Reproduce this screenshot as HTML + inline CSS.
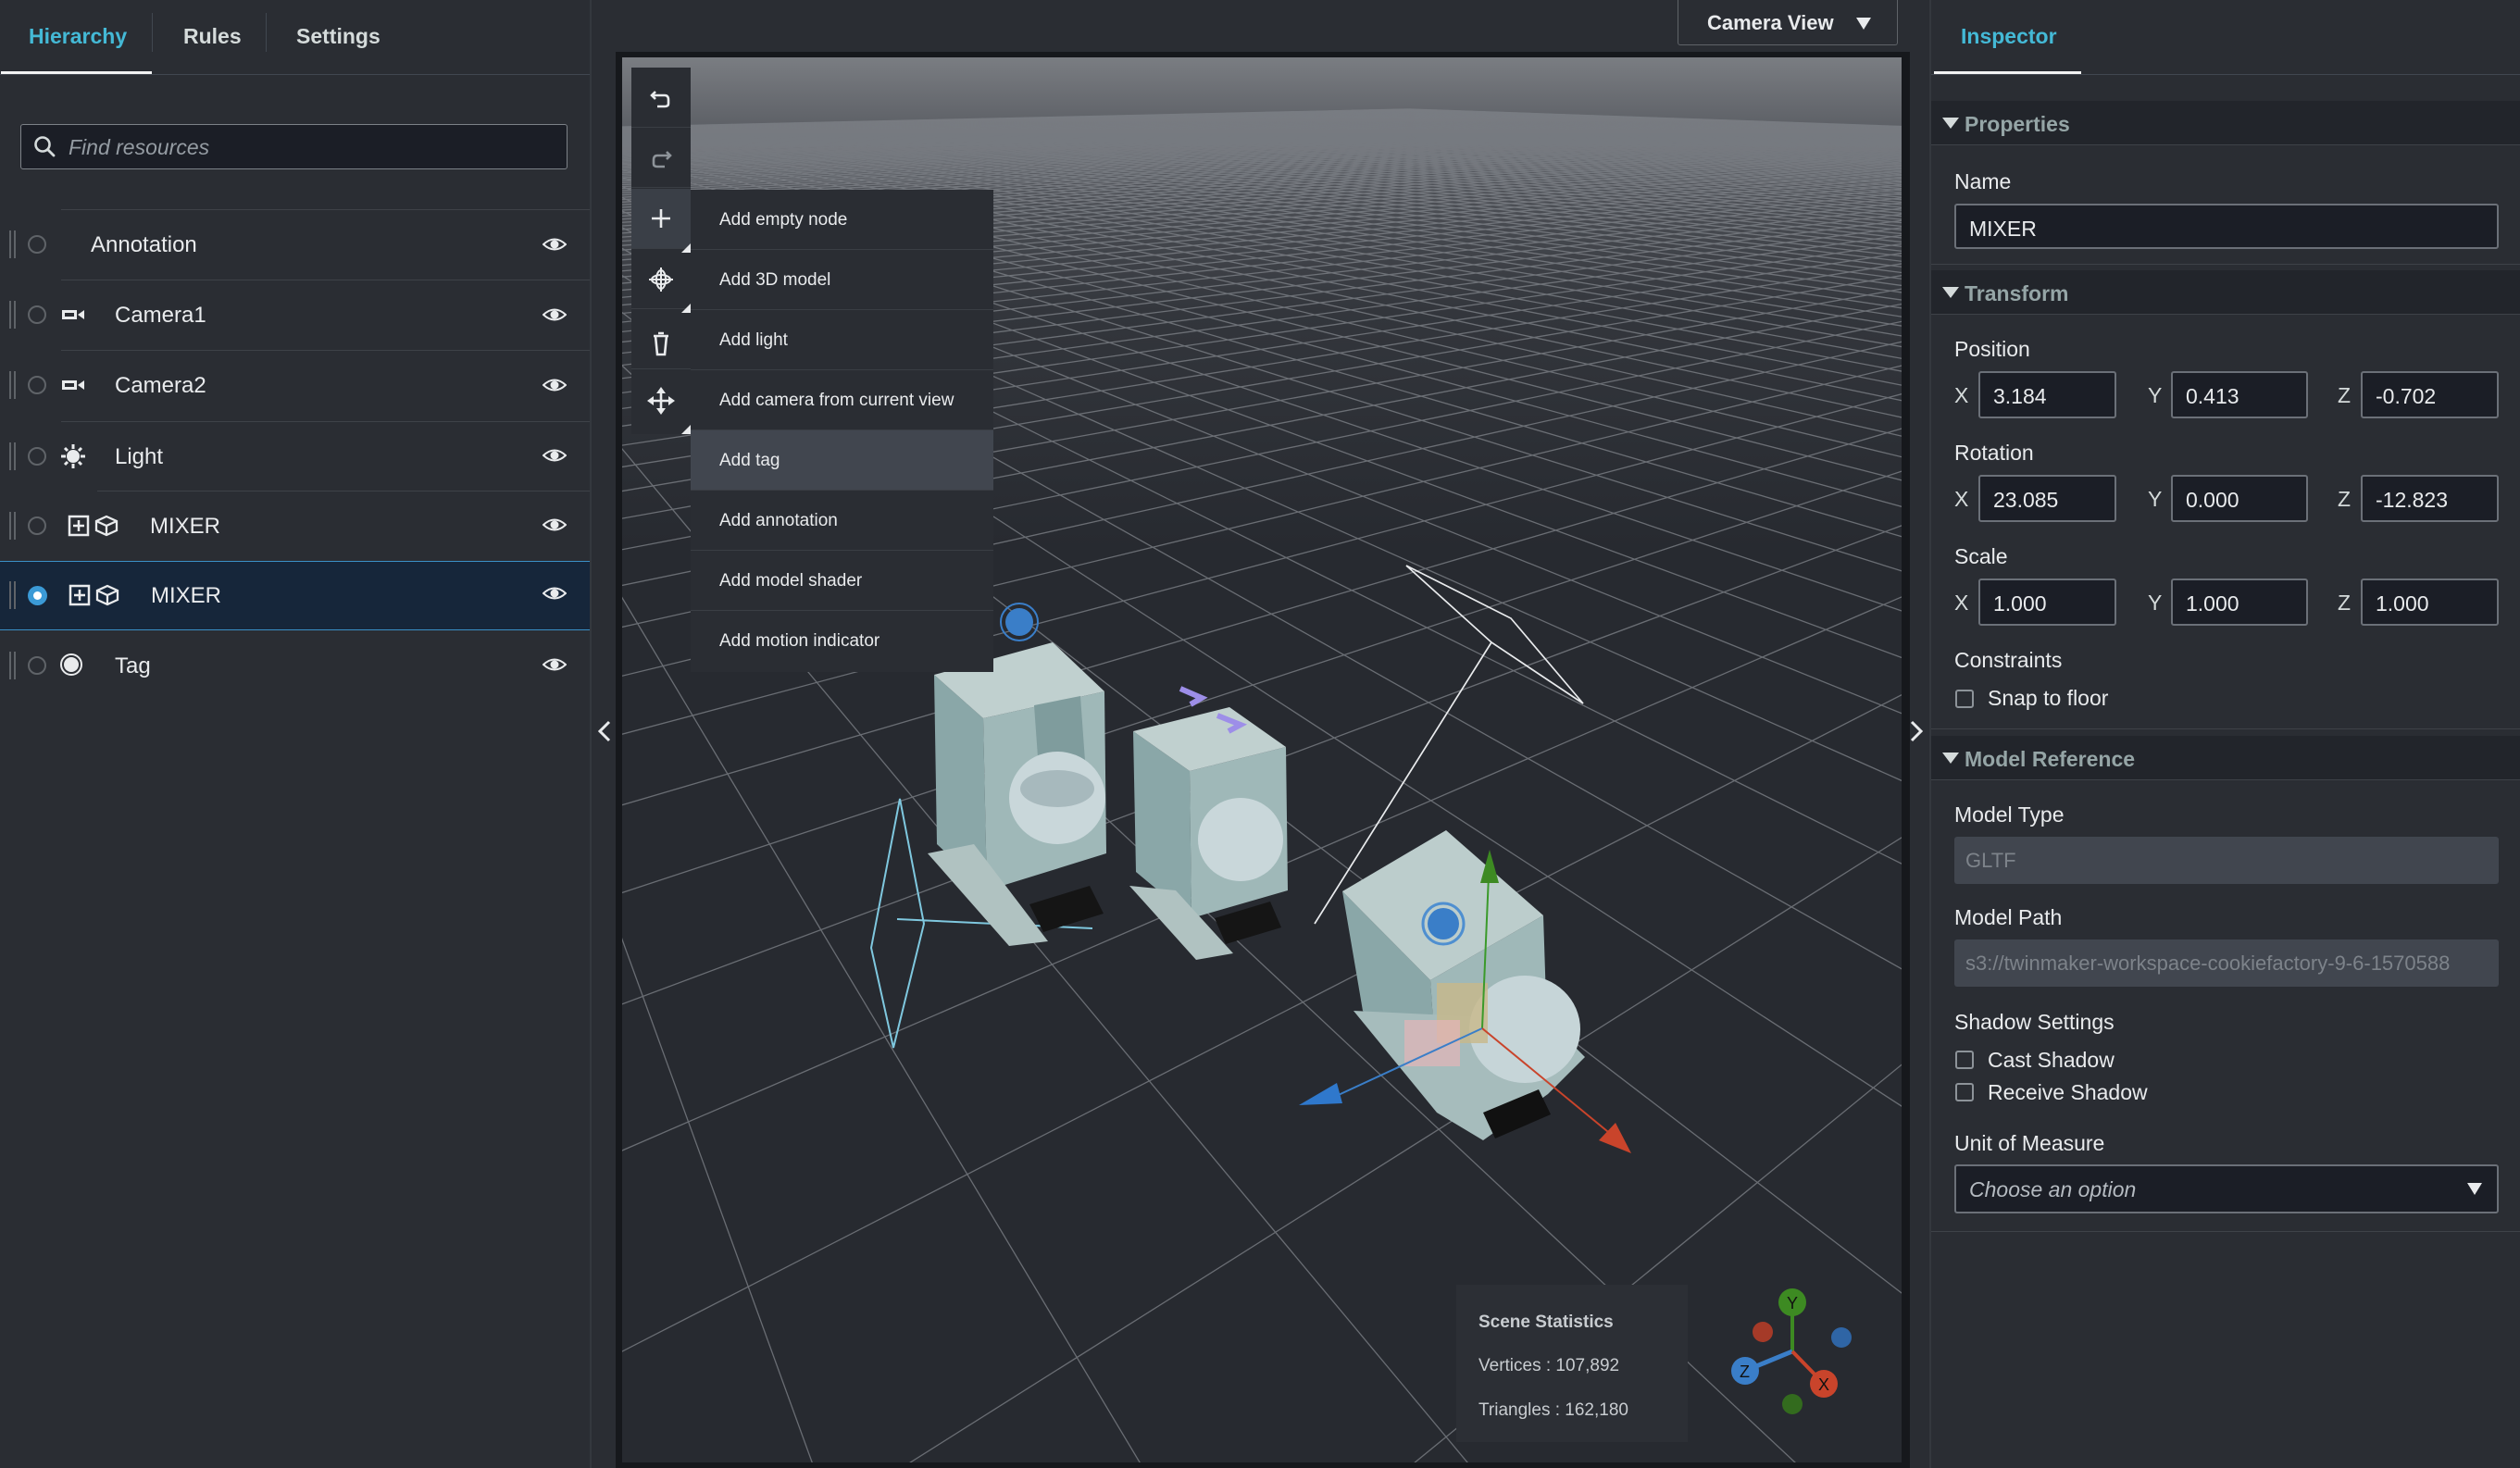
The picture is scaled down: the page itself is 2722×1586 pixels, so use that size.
<!DOCTYPE html>
<html><head><meta charset="utf-8">
<style>
*{box-sizing:border-box;margin:0;padding:0}
html,body{width:2722px;height:1586px;overflow:hidden}
body{background:#2a2d33;font-family:"Liberation Sans",sans-serif;color:#e9ebed;position:relative}
.a{position:absolute}
.tab{position:absolute;top:26px;font-size:23px;font-weight:bold;color:#d5dbdb}
.row{position:absolute;left:0;width:637px;height:76px}
.row .t{position:absolute;top:25px;font-size:24px;color:#e9ebed}
.hand{position:absolute;left:10px;top:23px;width:7px;height:30px;border-left:2px solid #5f6368;border-right:2px solid #5f6368}
.rad{position:absolute;left:30px;top:28px;width:20px;height:20px;border:2px solid #5f6368;border-radius:50%}
.sep{position:absolute;height:1px;background:#3e4248}
.lbl{position:absolute;font-size:23px;color:#e9ebed}
.inp{position:absolute;background:#1b1e26;border:2px solid #6b7078;border-radius:3px;font-size:23px;color:#e9ebed;padding:12px 0 0 14px}
.hdr{position:absolute;left:2086px;width:636px;height:48px;background:#22252b;border-bottom:1px solid #3e4248}
.hdr span{position:absolute;left:36px;top:12px;font-size:23px;font-weight:bold;color:#95a5a6}
.hdr i{position:absolute;left:12px;top:18px;width:0;height:0;border-left:9px solid transparent;border-right:9px solid transparent;border-top:12px solid #d5dbdb}
.ax{position:absolute;font-size:23px;color:#d5dbdb}
.cb{position:absolute;width:20px;height:20px;border:2px solid #8d9399;border-radius:3px}
.mi{position:absolute;left:746px;width:327px;height:65px;background:#2a2d33;border-bottom:1px solid #3a3e44;font-size:19px;color:#e9ebed;padding:22px 0 0 31px}
.tb{position:absolute;left:682px;width:64px;height:65px;background:#2a2d33;border-bottom:1px solid #3a3e44}
</style></head><body>

<!-- LEFT PANEL -->
<div class="tab" style="left:31px;color:#44b9d6">Hierarchy</div>
<div class="a" style="left:164px;top:14px;width:1px;height:42px;background:#414750"></div>
<div class="tab" style="left:198px">Rules</div>
<div class="a" style="left:287px;top:14px;width:1px;height:42px;background:#414750"></div>
<div class="tab" style="left:320px">Settings</div>
<div class="a" style="left:0;top:80px;width:637px;height:1px;background:#414750"></div>
<div class="a" style="left:1px;top:77px;width:163px;height:3px;background:#f2f3f3"></div>

<div class="a" style="left:22px;top:134px;width:591px;height:49px;background:#1b1e26;border:1.5px solid #7d8288;border-radius:3px"></div>
<svg class="a" style="left:36px;top:146px" width="26" height="26" viewBox="0 0 26 26"><circle cx="10" cy="10" r="7.5" fill="none" stroke="#d5dbdb" stroke-width="2.6"/><path d="M15.5 15.5 L22 22" stroke="#d5dbdb" stroke-width="2.8" stroke-linecap="round"/></svg>
<div class="a" style="left:74px;top:146px;font-size:23px;font-style:italic;color:#959ca3">Find resources</div>

<div class="sep" style="left:66px;top:226px;width:571px"></div>
<div class="row" style="top:226px"><div class="hand"></div><div class="rad"></div><div class="t" style="left:98px">Annotation</div></div>
<div class="sep" style="left:66px;top:302px;width:571px"></div>
<div class="row" style="top:302px"><div class="hand"></div><div class="rad"></div>
<svg class="a" style="left:66px;top:30px" width="26" height="16"><rect x="1" y="3" width="16" height="10" fill="#e9ebed"/><rect x="4" y="6" width="10" height="4" fill="#2a2d33"/><path d="M18 8 L25 3 V13 Z" fill="#e9ebed"/></svg>
<div class="t" style="left:124px">Camera1</div></div>
<div class="sep" style="left:66px;top:378px;width:571px"></div>
<div class="row" style="top:378px"><div class="hand"></div><div class="rad"></div>
<svg class="a" style="left:66px;top:30px" width="26" height="16"><rect x="1" y="3" width="16" height="10" fill="#e9ebed"/><rect x="4" y="6" width="10" height="4" fill="#2a2d33"/><path d="M18 8 L25 3 V13 Z" fill="#e9ebed"/></svg>
<div class="t" style="left:124px">Camera2</div></div>
<div class="sep" style="left:66px;top:455px;width:571px"></div>
<div class="row" style="top:455px"><div class="hand"></div><div class="rad"></div>
<svg class="a" style="left:65px;top:24px" width="28" height="28" viewBox="0 0 28 28"><circle cx="14" cy="14" r="7" fill="#e9ebed"/><g stroke="#e9ebed" stroke-width="3"><path d="M14 1V6M14 22V27M1 14H6M22 14H27M5 5L8 8M20 20L23 23M5 23L8 20M20 8L23 5"/></g></svg>
<div class="t" style="left:124px">Light</div></div>
<div class="sep" style="left:105px;top:530px;width:532px"></div>
<div class="row" style="top:530px"><div class="hand"></div><div class="rad"></div>
<svg class="a" style="left:73px;top:26px" width="58" height="24"><rect x="2" y="2" width="20" height="20" fill="none" stroke="#e9ebed" stroke-width="2.5"/><path d="M12 6V18M6 12H18" stroke="#e9ebed" stroke-width="2.5"/><path d="M42 2 L53 7 V17 L42 22 L31 17 V7 Z M31 7 L42 12 L53 7 M42 12 V22" fill="none" stroke="#e9ebed" stroke-width="2.3"/></svg>
<div class="t" style="left:162px">MIXER</div></div>
<div class="a" style="left:0;top:606px;width:637px;height:75px;background:#16263a;border-top:1px solid #3a8fc6;border-bottom:1px solid #3a8fc6"></div>
<div class="row" style="top:605px"><div class="hand"></div><div class="a" style="left:30px;top:28px;width:21px;height:21px;border-radius:50%;background:#3b9ad6"></div><div class="a" style="left:36px;top:34px;width:9px;height:9px;border-radius:50%;background:#fff"></div>
<svg class="a" style="left:74px;top:26px" width="58" height="24"><rect x="2" y="2" width="20" height="20" fill="none" stroke="#e9ebed" stroke-width="2.5"/><path d="M12 6V18M6 12H18" stroke="#e9ebed" stroke-width="2.5"/><path d="M42 2 L53 7 V17 L42 22 L31 17 V7 Z M31 7 L42 12 L53 7 M42 12 V22" fill="none" stroke="#e9ebed" stroke-width="2.3"/></svg>
<div class="t" style="left:163px">MIXER</div></div>
<div class="row" style="top:681px"><div class="hand"></div><div class="rad"></div>
<svg class="a" style="left:64px;top:24px" width="26" height="26"><circle cx="13" cy="13" r="11" fill="none" stroke="#e9ebed" stroke-width="2"/><circle cx="13" cy="13" r="8" fill="#e9ebed"/></svg>
<div class="t" style="left:124px">Tag</div></div>

<svg class="a" style="left:586px;top:256px" width="26" height="480">
<defs><g id="e" fill="none" stroke="#e9ebed" stroke-width="2"><path d="M1 8 Q13 -3 25 8 Q13 19 1 8 Z"/><circle cx="13" cy="8" r="3.5" fill="#e9ebed"/></g></defs>
<use href="#e" y="0"/><use href="#e" y="76"/><use href="#e" y="152"/><use href="#e" y="228"/><use href="#e" y="303"/><use href="#e" y="377"/><use href="#e" y="454"/>
</svg>

<div class="a" style="left:637px;top:0;width:2px;height:1586px;background:#34383e"></div>

<!-- CENTER -->
<div class="a" style="left:665px;top:56px;width:1398px;height:1530px;background:#16181c"></div>
<div class="a" style="left:1812px;top:0;width:238px;height:49px;border:1.5px solid #5f6368;border-top:none;border-radius:0 0 3px 3px"></div>
<div class="a" style="left:1844px;top:12px;font-size:22px;font-weight:bold;color:#e9ebed">Camera View</div>
<div class="a" style="left:2005px;top:19px;border-left:8px solid transparent;border-right:8px solid transparent;border-top:13px solid #e9ebed"></div>
<svg class="a" style="left:641px;top:775px" width="24" height="30"><path d="M17 5 L7 15 L17 25" fill="none" stroke="#e9ebed" stroke-width="3"/></svg>
<svg class="a" style="left:2058px;top:775px" width="24" height="30"><path d="M7 5 L17 15 L7 25" fill="none" stroke="#e9ebed" stroke-width="3"/></svg>

<svg id="vp" class="a" style="left:672px;top:62px" width="1382" height="1518" viewBox="0 0 1382 1518">
<defs><linearGradient id="hz" x1="0" y1="0" x2="0" y2="1"><stop offset="0" stop-color="#7a7d82"/><stop offset="0.05" stop-color="#5d6066"/><stop offset="0.18" stop-color="#33363c"/><stop offset="0.35" stop-color="#272a30"/><stop offset="1" stop-color="#272a30"/></linearGradient></defs>
<rect width="1382" height="1518" fill="url(#hz)"/>
<g id="grid" stroke="#80848a" stroke-width="1.3" fill="none" opacity="0.75"></g>
<!-- frustums -->
<path d="M300 801 L326 936 L293 1070 L269 962 Z M297 931 L508 941" stroke="#7fc8df" stroke-width="2" fill="none"/>
<path d="M847 549 L960 606 L1038 698 L939 632 Z M939 632 L748 936" stroke="#e9ebed" stroke-width="1.7" fill="none"/>
<!-- mixer 1 -->
<g>
<path d="M337 667 L390 714 L394 900 L340 850 Z" fill="#8aa7a8"/>
<path d="M390 714 L521 685 L523 860 L394 900 Z" fill="#9fb8b8"/>
<path d="M337 667 L465 632 L521 685 L390 714 Z" fill="#c0d0cf"/>
<path d="M445 700 L495 690 L500 760 L450 770 Z" fill="#7f9c9d"/>
<ellipse cx="470" cy="800" rx="52" ry="50" fill="#c9d7da"/>
<ellipse cx="470" cy="790" rx="40" ry="20" fill="#a7b9bd"/>
<path d="M330 860 L418 960 L460 955 L380 850 Z" fill="#b0c2c1"/>
<path d="M440 915 L505 895 L520 925 L455 945 Z" fill="#151515"/>
</g>
<!-- mixer 2 -->
<g>
<path d="M552 728 L613 771 L615 930 L555 880 Z" fill="#8aa7a8"/>
<path d="M613 771 L717 745 L719 900 L615 930 Z" fill="#9fb8b8"/>
<path d="M552 728 L656 702 L717 745 L613 771 Z" fill="#c0d0cf"/>
<ellipse cx="668" cy="845" rx="46" ry="45" fill="#c9d7da"/>
<path d="M548 895 L620 975 L660 968 L598 900 Z" fill="#b0c2c1"/>
<path d="M640 930 L700 912 L712 940 L652 958 Z" fill="#151515"/>
<path d="M603 682 L626 692 L614 699" stroke="#9d8ee8" stroke-width="6" fill="none"/>
<path d="M643 711 L668 721 L655 728" stroke="#9d8ee8" stroke-width="6" fill="none"/>
</g>
<!-- mixer 3 -->
<g>
<path d="M778 901 L873 997 L880 1100 L800 1030 Z" fill="#8aa7a8"/>
<path d="M873 997 L995 927 L1000 1080 L880 1100 Z" fill="#9fb8b8"/>
<path d="M778 901 L890 835 L995 927 L873 997 Z" fill="#bccdcc"/>
<path d="M790 1030 L880 1140 L930 1170 L1000 1120 L1040 1080 L1000 1040 Z" fill="#a6bcbc"/>
<ellipse cx="975" cy="1050" rx="60" ry="58" fill="#c6d5d8"/>
<rect x="880" y="1000" width="55" height="65" fill="#c8b88a" opacity="0.8"/>
<rect x="845" y="1040" width="60" height="50" fill="#e4b5b8" opacity="0.7"/>
<path d="M930 1140 L990 1115 L1003 1142 L943 1168 Z" fill="#111"/>
<circle cx="887" cy="936" r="22" fill="none" stroke="#4f8fd0" stroke-width="3"/><circle cx="887" cy="936" r="17" fill="#3a7ec8"/>
<path d="M937 860 L929 1049" stroke="#3a9a2a" stroke-width="2"/><path d="M937 856 L927 892 L947 892 Z" fill="#3d8a22"/>
<path d="M929 1049 L765 1125" stroke="#3a7ec8" stroke-width="2"/><path d="M731 1132 L772 1108 L778 1130 Z" fill="#2f78cc"/>
<path d="M929 1049 L1070 1165" stroke="#c9442b" stroke-width="2"/><path d="M1090 1184 L1055 1170 L1073 1151 Z" fill="#c9442b"/>
</g>
<circle cx="429" cy="610" r="20" fill="none" stroke="#3a7ec8" stroke-width="2"/><circle cx="429" cy="610" r="15" fill="#3a7ec8"/>
</svg>

<!-- toolbar -->
<div class="a" style="left:682px;top:73px;width:64px;height:396px;background:#2a2d33"></div>
<div class="tb" style="top:73px"></div><div class="tb" style="top:138px"></div>
<div class="tb" style="top:204px;background:#3a3f47"></div>
<div class="tb" style="top:269px"></div><div class="tb" style="top:334px"></div><div class="tb" style="top:400px;border:none;height:69px"></div>
<svg class="a" style="left:682px;top:73px" width="64" height="396">
<g fill="none" stroke="#e9ebed" stroke-width="2.6">
<path d="M26 26 L22 30 L26 34 M22 30 H36 Q40 30 40 35 V39 Q40 42 36 42 H28"/>
<path d="M38 91 L42 95 L38 99 M42 95 H28 Q24 95 24 100 V104 Q24 107 28 107 H36" stroke="#8d9399"/>
<path d="M32 153 V173 M22 163 H42"/>
<ellipse cx="32" cy="229" rx="10" ry="5" stroke-width="2"/><ellipse cx="32" cy="229" rx="5" ry="10" stroke-width="2"/><path d="M32 216 V242 M19 229 H45" stroke-width="2"/>
<path d="M24 290 H40 M26 290 L28 310 H36 L38 290 M29 287 H35"/>
<path d="M32 349 V371 M21 360 H43"/>
</g>
<g fill="#e9ebed"><path d="M32 345 L27 352 H37 Z M32 375 L27 368 H37 Z M17 360 L24 355 V365 Z M47 360 L40 355 V365 Z"/>
<path d="M64 190 V200 H54 Z M64 255 V265 H54 Z M64 386 V396 H54 Z"/></g>
</svg>
<!-- menu -->
<div class="mi" style="top:205px">Add empty node</div>
<div class="mi" style="top:270px">Add 3D model</div>
<div class="mi" style="top:335px">Add light</div>
<div class="mi" style="top:400px">Add camera from current view</div>
<div class="mi" style="top:465px;background:#41464f">Add tag</div>
<div class="mi" style="top:530px">Add annotation</div>
<div class="mi" style="top:595px">Add model shader</div>
<div class="mi" style="top:660px;height:66px;border:none">Add motion indicator</div>

<!-- stats -->
<div class="a" style="left:1573px;top:1388px;width:250px;height:170px;background:#2c2f35"></div>
<div class="a" style="left:1597px;top:1418px;font-size:19px;font-weight:bold;color:#c8ccd0">Scene Statistics</div>
<div class="a" style="left:1597px;top:1465px;font-size:19px;color:#c8ccd0">Vertices : 107,892</div>
<div class="a" style="left:1597px;top:1513px;font-size:19px;color:#c8ccd0">Triangles : 162,180</div>
<svg class="a" style="left:1860px;top:1385px" width="150" height="150">
<path d="M76 22 V75" stroke="#3d8a22" stroke-width="4" fill="none"/>
<path d="M76 75 L25 96" stroke="#3a7ec8" stroke-width="5"/><path d="M76 75 L110 110" stroke="#c9442b" stroke-width="4"/>
<circle cx="76" cy="22" r="15" fill="#3d8a22"/><text x="70" y="29" font-size="18" fill="#111" font-family="Liberation Sans">Y</text>
<circle cx="25" cy="96" r="15" fill="#3a7ec8"/><text x="19" y="103" font-size="18" fill="#111" font-family="Liberation Sans">Z</text>
<circle cx="110" cy="110" r="15" fill="#c9442b"/><text x="104" y="117" font-size="18" fill="#111" font-family="Liberation Sans">X</text>
<circle cx="44" cy="54" r="11" fill="#a53a28"/><circle cx="129" cy="60" r="11" fill="#2f65a5"/><circle cx="76" cy="132" r="11" fill="#336b1e"/>
</svg>

<!-- RIGHT PANEL -->
<div class="a" style="left:2084px;top:0;width:2px;height:1586px;background:#34383e"></div>
<div class="a" style="left:2118px;top:26px;font-size:23px;font-weight:bold;color:#44b9d6">Inspector</div>
<div class="a" style="left:2086px;top:80px;width:636px;height:1px;background:#414750"></div>
<div class="a" style="left:2089px;top:77px;width:159px;height:3px;background:#f2f3f3"></div>

<div class="hdr" style="top:109px"><i></i><span>Properties</span></div>
<div class="lbl" style="left:2111px;top:183px">Name</div>
<div class="inp" style="left:2111px;top:220px;width:588px;height:49px">MIXER</div>
<div class="a" style="left:2086px;top:285px;width:636px;height:1px;background:#3e4248"></div>
<div class="hdr" style="top:292px"><i></i><span>Transform</span></div>

<div class="lbl" style="left:2111px;top:364px">Position</div>
<div class="ax" style="left:2111px;top:414px">X</div><div class="inp" style="left:2137px;top:401px;width:149px;height:51px">3.184</div>
<div class="ax" style="left:2320px;top:414px">Y</div><div class="inp" style="left:2345px;top:401px;width:148px;height:51px">0.413</div>
<div class="ax" style="left:2525px;top:414px">Z</div><div class="inp" style="left:2550px;top:401px;width:149px;height:51px">-0.702</div>
<div class="lbl" style="left:2111px;top:476px">Rotation</div>
<div class="ax" style="left:2111px;top:526px">X</div><div class="inp" style="left:2137px;top:513px;width:149px;height:51px">23.085</div>
<div class="ax" style="left:2320px;top:526px">Y</div><div class="inp" style="left:2345px;top:513px;width:148px;height:51px">0.000</div>
<div class="ax" style="left:2525px;top:526px">Z</div><div class="inp" style="left:2550px;top:513px;width:149px;height:51px">-12.823</div>
<div class="lbl" style="left:2111px;top:588px">Scale</div>
<div class="ax" style="left:2111px;top:638px">X</div><div class="inp" style="left:2137px;top:625px;width:149px;height:51px">1.000</div>
<div class="ax" style="left:2320px;top:638px">Y</div><div class="inp" style="left:2345px;top:625px;width:148px;height:51px">1.000</div>
<div class="ax" style="left:2525px;top:638px">Z</div><div class="inp" style="left:2550px;top:625px;width:149px;height:51px">1.000</div>
<div class="lbl" style="left:2111px;top:700px">Constraints</div>
<div class="cb" style="left:2112px;top:745px"></div><div class="lbl" style="left:2147px;top:741px">Snap to floor</div>
<div class="a" style="left:2086px;top:787px;width:636px;height:1px;background:#3e4248"></div>
<div class="hdr" style="top:795px"><i></i><span>Model Reference</span></div>

<div class="lbl" style="left:2111px;top:867px">Model Type</div>
<div class="a" style="left:2111px;top:904px;width:588px;height:51px;background:#41464f;border-radius:3px;font-size:22px;color:#7d838a;padding:13px 0 0 12px">GLTF</div>
<div class="lbl" style="left:2111px;top:978px">Model Path</div>
<div class="a" style="left:2111px;top:1015px;width:588px;height:51px;background:#41464f;border-radius:3px;font-size:22px;color:#7d838a;padding:13px 0 0 12px;overflow:hidden;white-space:nowrap">s3://twinmaker-workspace-cookiefactory-9-6-1570588</div>
<div class="lbl" style="left:2111px;top:1091px">Shadow Settings</div>
<div class="cb" style="left:2112px;top:1135px"></div><div class="lbl" style="left:2147px;top:1132px">Cast Shadow</div>
<div class="cb" style="left:2112px;top:1170px"></div><div class="lbl" style="left:2147px;top:1167px">Receive Shadow</div>
<div class="lbl" style="left:2111px;top:1222px">Unit of Measure</div>
<div class="inp" style="left:2111px;top:1258px;width:588px;height:53px;font-style:italic;color:#b5bbc1">Choose an option</div>
<div class="a" style="left:2665px;top:1278px;border-left:8px solid transparent;border-right:8px solid transparent;border-top:13px solid #e9ebed"></div>
<div class="a" style="left:2086px;top:1330px;width:636px;height:1px;background:#3e4248"></div>

<script>
(function(){
var g=document.getElementById('grid');
var th=34*Math.PI/180,ph=33*Math.PI/180,h=4.2,F=1150,cx=560,cy=790;
var c=Math.cos(ph),s=Math.sin(ph),ct=Math.cos(th),st=Math.sin(th);
function P(X,Z){var x=X*c-Z*s,z=X*s+Z*c;var d=h*st+z*ct,u=-h*ct+z*st;return [cx+F*x/d,cy-F*u/d];}
function D(X,Z){var z=X*s+Z*c;return h*st+z*ct;}
var out='',N=120,mn=0.6;
function seg(X1,Z1,X2,Z2){var d1=D(X1,Z1),d2=D(X2,Z2);
 if(d1<mn&&d2<mn)return;
 if(d1<mn){var t=(mn-d1)/(d2-d1);X1=X1+(X2-X1)*t;Z1=Z1+(Z2-Z1)*t;}
 if(d2<mn){var t=(mn-d2)/(d1-d2);X2=X2+(X1-X2)*t;Z2=Z2+(Z1-Z2)*t;}
 var a=P(X1,Z1),b=P(X2,Z2);
 out+='<line x1="'+a[0].toFixed(1)+'" y1="'+a[1].toFixed(1)+'" x2="'+b[0].toFixed(1)+'" y2="'+b[1].toFixed(1)+'"/>';}
for(var i=-N;i<=N;i++){seg(i,-N,i,N);seg(-N,i,N,i);}
g.innerHTML=out;
})();
</script>
</body></html>
